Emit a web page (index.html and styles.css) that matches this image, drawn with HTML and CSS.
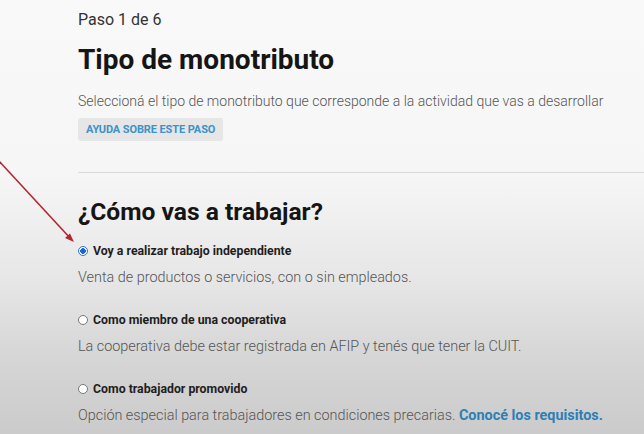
FILE: index.html
```html
<!DOCTYPE html>
<html lang="es">
<head>
    <meta charset="UTF-8">
    <meta name="viewport" content="width=device-width, initial-scale=1.0">
    <title>Monotributo - Paso 1</title>
    <link rel="stylesheet" href="styles.css">
</head>
<body>
    <div class="step-page">
        <p class="step-count">Paso 1 de 6</p>
        <h1 class="step-title">Tipo de monotributo</h1>
        <p class="step-lead">Seleccioná el tipo de monotributo que corresponde a la actividad que vas a desarrollar</p>
        <button class="help-btn" type="button">AYUDA SOBRE ESTE PASO</button>

        <hr class="divider">

        <h2 class="section-title">¿Cómo vas a trabajar?</h2>

        <form class="options">
            <div class="option">
                <label class="option-label">
                    <input type="radio" name="tipo" checked>
                    <span>Voy a realizar trabajo independiente</span>
                </label>
                <p class="option-desc">Venta de productos o servicios, con o sin empleados.</p>
            </div>
            <div class="option">
                <label class="option-label">
                    <input type="radio" name="tipo">
                    <span>Como miembro de una cooperativa</span>
                </label>
                <p class="option-desc">La cooperativa debe estar registrada en AFIP y tenés que tener la CUIT.</p>
            </div>
            <div class="option">
                <label class="option-label">
                    <input type="radio" name="tipo">
                    <span>Como trabajador promovido</span>
                </label>
                <p class="option-desc">Opción especial para trabajadores en condiciones precarias. <a href="#">Conocé los requisitos.</a></p>
            </div>
        </form>
    </div>

    <!-- annotation arrow drawn over the page -->
    <svg class="pointer-arrow" width="90" height="250" viewBox="0 0 90 250">
        <line x1="-2" y1="160" x2="71" y2="239" stroke="#b3262f" stroke-width="1.6"/>
        <path d="M74 242 L65 238 L70 233.5 Z" fill="#b3262f"/>
    </svg>
</body>
</html>
```

FILE: styles.css
```css
body {
    margin: 0;
    font-family: 'Roboto', 'Liberation Sans', sans-serif;
    color: #222;
    min-height: 100vh;
    background: linear-gradient(180deg, #f9f9f9 0%, #f6f6f6 40%, #e6e6e6 65%, #d6d6d6 82%, #cbcbcb 100%);
    overflow: hidden;
}

.step-page {
    padding: 10px 0 0 78px;
}

.step-count {
    margin: 0;
    font-size: 16px;
    line-height: 20px;
    color: #333;
}

.step-title {
    margin: 12px 0 0;
    font-size: 28px;
    line-height: 36px;
    font-weight: 700;
    color: #151515;
}

.step-lead {
    margin: 13px 0 0;
    font-size: 14px;
    line-height: 20px;
    font-weight: 300;
    color: #555;
}

.help-btn {
    margin-top: 7px;
    height: 23px;
    padding: 0 8px;
    border: none;
    border-radius: 3px;
    background: #e6e6e6;
    color: #3d92c7;
    font-family: inherit;
    font-size: 11px;
    font-weight: 700;
    letter-spacing: -0.1px;
    cursor: pointer;
}

.divider {
    margin: 31px 0 0;
    border: none;
    border-top: 1px solid #d9d9d9;
}

.section-title {
    margin: 24px 0 0;
    font-size: 24.6px;
    line-height: 30px;
    font-weight: 700;
    color: #151515;
}

.options {
    margin-top: 15px;
}

.option + .option {
    margin-top: 23px;
}

.option-label {
    display: flex;
    align-items: center;
    gap: 5px;
    height: 18px;
    font-size: 12.3px;
    font-weight: 700;
    color: #1e1e1e;
    cursor: pointer;
}

.option-label input {
    appearance: none;
    margin: 0;
    width: 10px;
    height: 10px;
    border: 1px solid #777;
    border-radius: 50%;
    background: #fff;
}

.option-label input:checked {
    border-color: #2f76d2;
    background: radial-gradient(circle, #1a66d0 0 2.6px, #fff 3px);
}

.option-desc {
    margin: 8px 0 0;
    font-size: 14.4px;
    line-height: 20px;
    font-weight: 300;
    color: #555;
}

.option-desc a {
    color: #2d7fb5;
    font-weight: 700;
    text-decoration: none;
}

.pointer-arrow {
    position: absolute;
    top: 0;
    left: 0;
}
```
